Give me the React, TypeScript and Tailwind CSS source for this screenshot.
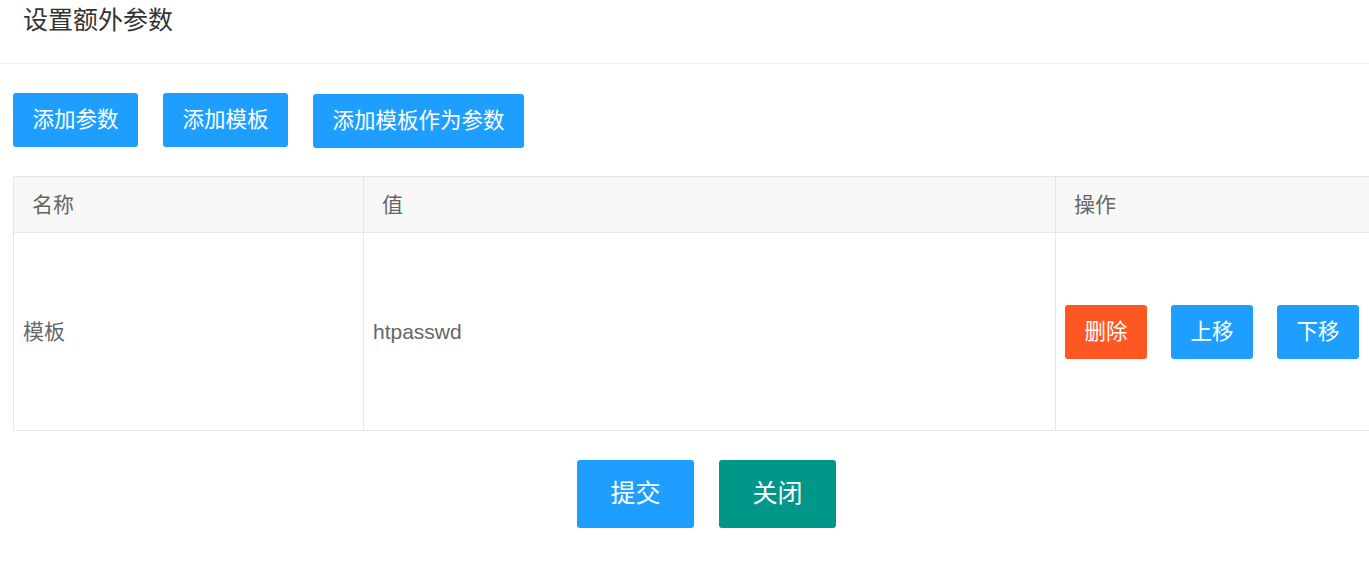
import React from "react";

const font = { fontFamily: '"Liberation Sans", "Noto Sans CJK SC", sans-serif' };

function Btn({ children, color, className = "" }: { children: React.ReactNode; color: string; className?: string }) {
  return (
    <button
      className={`h-[54px] px-[19.5px] text-[21.5px] text-white rounded-[3px] leading-[54px] whitespace-nowrap ${color} ${className}`}
    >
      {children}
    </button>
  );
}

export default function App() {
  return (
    <div className="w-full h-[567px] overflow-hidden bg-white" style={font}>
      <div className="w-[1413px]">
        <div className="h-[64px] border-b border-[#eeeeee] px-[23px] text-[25px] leading-[40px] text-[#333333]">
          设置额外参数
        </div>
        <div className="px-[13px] pt-[29px]">
          <div className="flex items-start gap-[25px]">
            <Btn color="bg-[#1E9FFF]">添加参数</Btn>
            <Btn color="bg-[#1E9FFF]">添加模板</Btn>
            <Btn color="bg-[#1E9FFF]" className="mt-[1px]">添加模板作为参数</Btn>
          </div>
          <table className="mt-[28px] w-full table-fixed border-collapse text-[21px] text-[#666666]">
            <colgroup>
              <col className="w-[350px]" />
              <col className="w-[692px]" />
              <col />
            </colgroup>
            <thead>
              <tr className="h-[56px] bg-[#f8f8f8]">
                <th className="border border-[#e6e6e6] pl-[18px] text-left font-normal">名称</th>
                <th className="border border-[#e6e6e6] pl-[18px] text-left font-normal">值</th>
                <th className="border border-[#e6e6e6] pl-[18px] text-left font-normal">操作</th>
              </tr>
            </thead>
            <tbody>
              <tr className="h-[198px]">
                <td className="border border-[#e6e6e6] pl-[9px] align-middle">模板</td>
                <td className="border border-[#e6e6e6] pl-[9px] align-middle">htpasswd</td>
                <td className="border border-[#e6e6e6] pl-[9px] align-middle">
                  <div className="flex gap-[24px]">
                    <Btn color="bg-[#FF5722]">删除</Btn>
                    <Btn color="bg-[#1E9FFF]">上移</Btn>
                    <Btn color="bg-[#1E9FFF]">下移</Btn>
                  </div>
                </td>
              </tr>
            </tbody>
          </table>
          <div className="mt-[29px] flex justify-center gap-[25px]">
            <button className="h-[68px] w-[117px] rounded-[3px] bg-[#1E9FFF] text-[25px] text-white">提交</button>
            <button className="h-[68px] w-[117px] rounded-[3px] bg-[#009688] text-[25px] text-white">关闭</button>
          </div>
        </div>
      </div>
    </div>
  );
}
